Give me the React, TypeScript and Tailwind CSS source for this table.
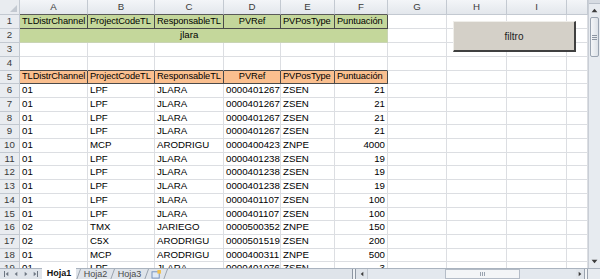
import React from "react";

// column widths for A..I plus the cut-off column at the right edge
const COL_W = [
  "w-[68px]",
  "w-[67px]",
  "w-[69px]",
  "w-[57px]",
  "w-[54px]",
  "w-[53px]",
  "w-[59px]",
  "w-[60px]",
  "w-[60px]",
  "w-[21px]",
];
const LETTERS = ["A", "B", "C", "D", "E", "F", "G", "H", "I", ""];

type Align = "l" | "r" | "c";

const HEAD = ["TLDistrChannel", "ProjectCodeTL", "ResponsableTL", "PVRef", "PVPosType", "Puntuación"];
const HEAD_ALIGN: Align[] = ["l", "l", "l", "c", "l", "l"];
const DATA_ALIGN: Align[] = ["l", "l", "l", "l", "l", "r"];

type Row = {
  n: number;
  h: string;
  kind: "green" | "merge" | "orange" | "data" | "empty";
  cells?: string[];
  darkBottom?: boolean;
};

const rows: Row[] = [
  { n: 1, h: "h-[14px]", kind: "green", cells: HEAD },
  { n: 2, h: "h-[14px]", kind: "merge" },
  { n: 3, h: "h-[14px]", kind: "empty" },
  { n: 4, h: "h-[14px]", kind: "empty", darkBottom: true },
  { n: 5, h: "h-[13px]", kind: "orange", cells: HEAD },
  { n: 6, h: "h-[14px]", kind: "data", cells: ["01", "LPF", "JLARA", "0000401267", "ZSEN", "21"] },
  { n: 7, h: "h-[14px]", kind: "data", cells: ["01", "LPF", "JLARA", "0000401267", "ZSEN", "21"] },
  { n: 8, h: "h-[13px]", kind: "data", cells: ["01", "LPF", "JLARA", "0000401267", "ZSEN", "21"] },
  { n: 9, h: "h-[14px]", kind: "data", cells: ["01", "LPF", "JLARA", "0000401267", "ZSEN", "21"] },
  { n: 10, h: "h-[14px]", kind: "data", cells: ["01", "MCP", "ARODRIGU", "0000400423", "ZNPE", "4000"] },
  { n: 11, h: "h-[13px]", kind: "data", cells: ["01", "LPF", "JLARA", "0000401238", "ZSEN", "19"] },
  { n: 12, h: "h-[14px]", kind: "data", cells: ["01", "LPF", "JLARA", "0000401238", "ZSEN", "19"] },
  { n: 13, h: "h-[14px]", kind: "data", cells: ["01", "LPF", "JLARA", "0000401238", "ZSEN", "19"] },
  { n: 14, h: "h-[14px]", kind: "data", cells: ["01", "LPF", "JLARA", "0000401107", "ZSEN", "100"] },
  { n: 15, h: "h-[13px]", kind: "data", cells: ["01", "LPF", "JLARA", "0000401107", "ZSEN", "100"] },
  { n: 16, h: "h-[14px]", kind: "data", cells: ["02", "TMX", "JARIEGO", "0000500352", "ZNPE", "150"] },
  { n: 17, h: "h-[14px]", kind: "data", cells: ["02", "C5X", "ARODRIGU", "0000501519", "ZSEN", "200"] },
  { n: 18, h: "h-[13px]", kind: "data", cells: ["01", "MCP", "ARODRIGU", "0000400311", "ZNPE", "500"] },
  { n: 19, h: "h-[14px]", kind: "data", cells: ["01", "LPF", "JLARA", "0000401076", "ZSEN", "3"] },
];

const alignCls = (a: Align) =>
  a === "r" ? "justify-end pr-[2px]" : a === "c" ? "justify-center" : "justify-start pl-[2px]";

function Cell({
  w,
  text,
  align = "l",
  bg = "",
  dark = false,
  darkBottom = false,
  tight = false,
}: {
  w: string;
  text?: string;
  align?: Align;
  bg?: string;
  dark?: boolean;
  darkBottom?: boolean;
  tight?: boolean;
}) {
  return (
    <div
      className={`${w} shrink-0 h-full flex items-center overflow-hidden whitespace-nowrap border-r border-b ${
        dark ? "border-[#4a4a4a]" : "border-[#dcdee2]"
      } ${darkBottom ? "border-b-[#4a4a4a]" : ""} ${bg} ${alignCls(align)} ${
        tight ? "text-[9.3px] tracking-[-0.1px]" : ""
      }`}
    >
      {text}
    </div>
  );
}

function RowNum({ n }: { n: number }) {
  return (
    <div className="w-[20px] shrink-0 h-full flex items-center justify-center bg-[#e9ecf0] border-r border-b border-[#c3c9d1] text-[#3a3a3a]">
      {n}
    </div>
  );
}

function SheetRow({ row }: { row: Row }) {
  if (row.kind === "merge") {
    return (
      <div className={`flex ${row.h}`}>
        <RowNum n={row.n} />
        <div className="w-[368px] shrink-0 h-full flex items-center pl-[160px] bg-[#c4d79b] border-r border-b border-[#c9d4b4]">
          jlara
        </div>
        {COL_W.slice(6).map((w, i) => (
          <Cell key={i} w={w} />
        ))}
      </div>
    );
  }
  const styled = row.kind === "green" || row.kind === "orange";
  const bg = row.kind === "green" ? "bg-[#c4d79b]" : row.kind === "orange" ? "bg-[#fabf8f]" : "";
  return (
    <div className={`flex ${row.h}`}>
      <RowNum n={row.n} />
      {COL_W.map((w, i) => {
        const inTable = i < 6;
        return (
          <Cell
            key={i}
            w={w}
            text={row.cells?.[i]}
            align={styled ? HEAD_ALIGN[i] : DATA_ALIGN[i] ?? "l"}
            bg={inTable ? bg : ""}
            dark={styled && inTable}
            darkBottom={!!row.darkBottom && inTable}
            tight={styled}
          />
        );
      })}
    </div>
  );
}

function Tri({ dir, className = "" }: { dir: "up" | "down" | "left" | "right"; className?: string }) {
  const pts = {
    up: "0,5 7,5 3.5,1",
    down: "0,1 7,1 3.5,5",
    left: "5,0 5,7 1,3.5",
    right: "1,0 1,7 5,3.5",
  }[dir];
  const vb = dir === "up" || dir === "down" ? "0 0 7 6" : "0 0 6 7";
  return (
    <svg viewBox={vb} className={className} fill="currentColor">
      <polygon points={pts} />
    </svg>
  );
}

function VScroll() {
  return (
    <div className="w-[12px] shrink-0 h-full flex flex-col bg-[#e7ebf0] border-l border-[#c9ced6]">
      <div className="h-[4px] bg-[#d6dbe2] border-b border-[#b9c0ca]" />
      <div className="h-[13px] flex items-center justify-center text-[#3c3c3c]">
        <Tri dir="up" className="w-[7px] h-[5px]" />
      </div>
      <div className="mx-[1px] h-[40px] rounded-[2px] border border-[#9aa4b1] bg-gradient-to-r from-[#f4f6f8] to-[#dde2e8] flex flex-col items-center justify-center gap-[1px]">
        <div className="w-[5px] h-px bg-[#8d96a2]" />
        <div className="w-[5px] h-px bg-[#8d96a2]" />
        <div className="w-[5px] h-px bg-[#8d96a2]" />
      </div>
      <div className="flex-1" />
      <div className="h-[13px] flex items-center justify-center text-[#3c3c3c]">
        <Tri dir="down" className="w-[7px] h-[5px]" />
      </div>
    </div>
  );
}

function NavButtons() {
  return (
    <div className="w-[42px] shrink-0 flex items-center justify-around px-[1px] text-[#6d7682]">
      <div className="flex items-center">
        <div className="w-px h-[6px] bg-current" />
        <Tri dir="left" className="w-[4px] h-[6px]" />
      </div>
      <Tri dir="left" className="w-[4px] h-[6px]" />
      <Tri dir="right" className="w-[4px] h-[6px]" />
      <div className="flex items-center">
        <Tri dir="right" className="w-[4px] h-[6px]" />
        <div className="w-px h-[6px] bg-current" />
      </div>
    </div>
  );
}

function Slant() {
  return (
    <svg viewBox="0 0 5 11" className="w-[5px] h-[11px] shrink-0 text-[#9aa3af]">
      <line x1="0.5" y1="11" x2="4.5" y2="0" stroke="currentColor" strokeWidth="1" />
    </svg>
  );
}

function BottomBar() {
  return (
    <div className="h-[11px] shrink-0 flex bg-[#dfe4ea] border-t border-[#aab3bf] text-[9px] leading-none">
      <NavButtons />
      <div className="w-[34px] shrink-0 bg-white flex items-center justify-center font-bold text-[#111] -mt-px">
        Hoja1
      </div>
      <Slant />
      <div className="w-[29px] shrink-0 flex items-center justify-center text-[#4a4a4a]">Hoja2</div>
      <Slant />
      <div className="w-[29px] shrink-0 flex items-center justify-center text-[#4a4a4a]">Hoja3</div>
      <Slant />
      <div className="w-[14px] shrink-0 flex items-center justify-center">
        <svg viewBox="0 0 12 10" className="w-[11px] h-[9px]">
          <rect x="1" y="2" width="8" height="7" fill="#dfe9f5" stroke="#6f8db8" strokeWidth="1" />
          <rect x="7" y="0" width="4" height="4" fill="#f2c14e" />
        </svg>
      </div>
      <Slant />
      <div className="flex-1" />
      <div className="w-[4px] shrink-0 border-x border-[#8d96a2] bg-[#eef1f4]" />
      <div className="w-[12px] shrink-0 flex items-center justify-center text-[#3c3c3c] border-r border-[#c2c8d0]">
        <Tri dir="left" className="w-[4px] h-[6px]" />
      </div>
      <div className="w-[77px] shrink-0 bg-[#e3e8ee]" />
      <div className="w-[75px] shrink-0 bg-[#f3f5f7] border border-[#b4bcc7] flex items-center justify-center">
        <div className="w-[5px] h-[4px] border-x border-[#9aa3af] flex justify-center">
          <div className="w-px h-full bg-[#9aa3af]" />
        </div>
      </div>
      <div className="w-[56px] shrink-0 bg-[#e3e8ee]" />
      <div className="w-[8px] shrink-0 flex items-center justify-center text-[#3c3c3c]">
        <Tri dir="right" className="w-[4px] h-[6px]" />
      </div>
      <div className="w-[4px] shrink-0 border-x border-[#9aa3af] bg-[#f3f5f7]" />
      <div className="w-[12px] shrink-0 bg-[#e7ebf0]" />
    </div>
  );
}

export default function App() {
  return (
    <div
      className="w-[600px] h-[279px] overflow-hidden bg-white flex flex-col text-[9.7px] text-black"
      style={{ fontFamily: '"Liberation Sans", Arial, sans-serif' }}
    >
      <div className="h-[268px] shrink-0 flex">
        <div className="relative w-[588px] shrink-0 h-full overflow-hidden">
          {/* column letters */}
          <div className="flex h-[15px]">
            <div className="w-[20px] shrink-0 h-full bg-[#e9ecf0] border-r border-b border-[#c3c9d1] flex items-end justify-end p-[2px]">
              <svg viewBox="0 0 8 8" className="w-[7px] h-[7px]">
                <polygon points="8,0 8,8 0,8" fill="#c3c9d1" />
              </svg>
            </div>
            {COL_W.map((w, i) => (
              <div
                key={i}
                className={`${w} shrink-0 h-full flex items-center justify-center bg-gradient-to-b from-[#f3f5f8] to-[#e3e7ec] border-r border-b ${
                  i < 6 ? "border-r-[#c3c9d1] border-b-[#5a5a5a]" : "border-[#c3c9d1]"
                } text-[#3a3a3a]`}
              >
                {LETTERS[i]}
              </div>
            ))}
          </div>
          {rows.map((r) => (
            <SheetRow key={r.n} row={r} />
          ))}

          {/* form button sitting over H1:I3 */}
          <button className="absolute left-[453px] top-[21px] w-[123px] h-[31px] bg-[#d4d0c8] border border-t-[#efeeea] border-l-[#efeeea] border-r-2 border-b-2 border-r-[#404040] border-b-[#404040] text-[10px] text-[#222] flex items-center justify-center">
            filtro
          </button>
        </div>
        <VScroll />
      </div>
      <BottomBar />
    </div>
  );
}
